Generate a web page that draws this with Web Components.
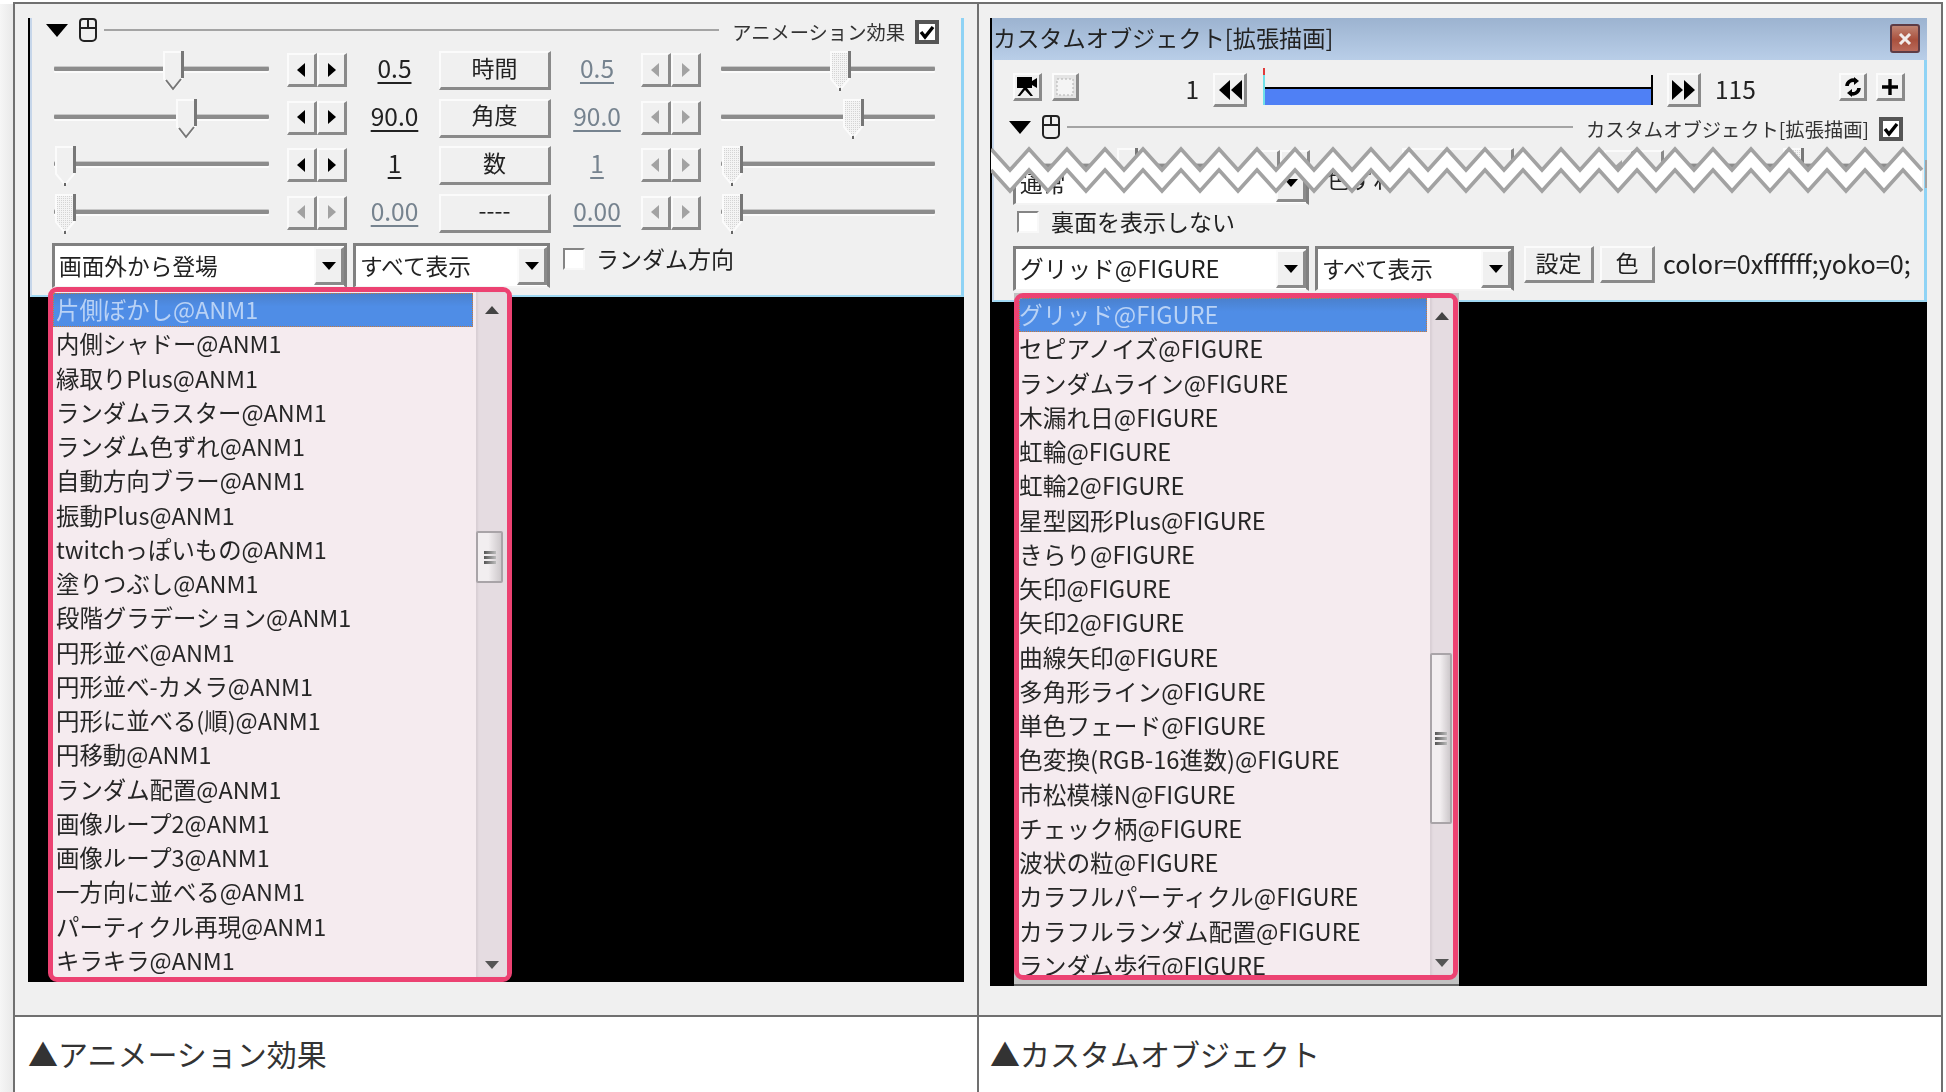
<!DOCTYPE html>
<html lang="ja">
<head>
<meta charset="utf-8">
<title>AviUtl</title>
<style>
  html, body { margin: 0; height: 100%; overflow: hidden; background: #fff; }
  body { font-family: "Noto Sans CJK JP", "Noto Sans", sans-serif; color: #222; }
</style>
</head>
<body>
<shot-table>
  <shot-cell caption="▲アニメーション効果" style="--pad:13px">
    <aul-screen style="--w:936px;--h:964px">
      <anim-panel></anim-panel>
      <aul-list slot="menu" thumb-top="239" thumb-h="52" style="left:20px;top:269px;width:464px;height:695px">
        <aul-item selected>片側ぼかし@ANM1</aul-item>
        <aul-item>内側シャドー@ANM1</aul-item>
        <aul-item>縁取りPlus@ANM1</aul-item>
        <aul-item>ランダムラスター@ANM1</aul-item>
        <aul-item>ランダム色ずれ@ANM1</aul-item>
        <aul-item>自動方向ブラー@ANM1</aul-item>
        <aul-item>振動Plus@ANM1</aul-item>
        <aul-item>twitchっぽいもの@ANM1</aul-item>
        <aul-item>塗りつぶし@ANM1</aul-item>
        <aul-item>段階グラデーション@ANM1</aul-item>
        <aul-item>円形並べ@ANM1</aul-item>
        <aul-item>円形並べ-カメラ@ANM1</aul-item>
        <aul-item>円形に並べる(順)@ANM1</aul-item>
        <aul-item>円移動@ANM1</aul-item>
        <aul-item>ランダム配置@ANM1</aul-item>
        <aul-item>画像ループ2@ANM1</aul-item>
        <aul-item>画像ループ3@ANM1</aul-item>
        <aul-item>一方向に並べる@ANM1</aul-item>
        <aul-item>パーティクル再現@ANM1</aul-item>
        <aul-item>キラキラ@ANM1</aul-item>
      </aul-list>
    </aul-screen>
  </shot-cell>
  <shot-cell caption="▲カスタムオブジェクト" style="--pad:11px">
    <aul-screen style="--w:937px;--h:968px">
      <custom-panel></custom-panel>
      <aul-list slot="menu" tail thumb-top="355" thumb-h="171" style="left:24px;top:275px;width:445px;height:693px">
        <aul-item selected>グリッド@FIGURE</aul-item>
        <aul-item>セピアノイズ@FIGURE</aul-item>
        <aul-item>ランダムライン@FIGURE</aul-item>
        <aul-item>木漏れ日@FIGURE</aul-item>
        <aul-item>虹輪@FIGURE</aul-item>
        <aul-item>虹輪2@FIGURE</aul-item>
        <aul-item>星型図形Plus@FIGURE</aul-item>
        <aul-item>きらり@FIGURE</aul-item>
        <aul-item>矢印@FIGURE</aul-item>
        <aul-item>矢印2@FIGURE</aul-item>
        <aul-item>曲線矢印@FIGURE</aul-item>
        <aul-item>多角形ライン@FIGURE</aul-item>
        <aul-item>単色フェード@FIGURE</aul-item>
        <aul-item>色変換(RGB-16進数)@FIGURE</aul-item>
        <aul-item>市松模様N@FIGURE</aul-item>
        <aul-item>チェック柄@FIGURE</aul-item>
        <aul-item>波状の粒@FIGURE</aul-item>
        <aul-item>カラフルパーティクル@FIGURE</aul-item>
        <aul-item>カラフルランダム配置@FIGURE</aul-item>
        <aul-item>ランダム歩行@FIGURE</aul-item>
      </aul-list>
    </aul-screen>
  </shot-cell>
</shot-table>

<script>
const FONT = '"Noto Sans CJK JP", "Noto Sans", sans-serif';
const RAISED = 'background:#f0f0f0;border-style:solid;border-width:2px 3px 3px 2px;border-color:#fbfbfb #8a8a8a #8a8a8a #fbfbfb;box-sizing:border-box;';

class Base extends HTMLElement {
  constructor() {
    super();
    this.attachShadow({ mode: 'open' });
  }
  connectedCallback() {
    this.render();
  }
}

class ShotTable extends Base {
  render() {
    this.shadowRoot.innerHTML = `
    <style>
      :host { display: grid; grid-template-columns: 966px 964px; width: 1930px; margin-left: 13px; padding-top: 2px;
              position: relative; font-family: ${FONT}; }
      .line { position: absolute; left: 0; right: 0; top: 2px; height: 2px; background: #707070; z-index: 1; }
      :host::before { content: ""; position: absolute; left: -13px; width: 13px; top: 4px; height: 1088px;
              background: linear-gradient(90deg, #f6f6f6, #e9e9e9); }
    </style>
    <div class="line"></div>
    <slot></slot>`;
  }
}

class ShotCell extends Base {
  render() {
    this.shadowRoot.innerHTML = `
    <style>
      :host { display: block; border-right: 2px solid #707070; height: 1090px; background: #fff; }
      :host(:first-of-type) { border-left: 2px solid #707070; }
      .pic { background: #f0f0f0; height: 1015px; padding: 16px 0 0 var(--pad); box-sizing: border-box;
             border-bottom: 2px solid #707070; }
      .cap { font-size: 30px; line-height: 40px; color: #333; padding: 16px 0 0 var(--pad); white-space: nowrap; }
    </style>
    <div class="pic"><slot></slot></div>
    <div class="cap">${this.getAttribute('caption')}</div>`;
  }
}

class AulScreen extends Base {
  render() {
    this.shadowRoot.innerHTML = `
    <style>
      :host { display: flex; flex-direction: column; width: var(--w); height: var(--h); background: #000; position: relative;
              filter: blur(.55px); }
      ::slotted([slot=menu]) { position: absolute; }
    </style>
    <slot></slot><slot name="menu"></slot>`;
  }
}

class AulMouseHead extends Base {
  render() {
    this.shadowRoot.innerHTML = `
    <style>
      :host { display: flex; align-items: flex-start; height: 26px; font-size: 19.300px; color: #333; }
      .tri { width: 0; height: 0; border-style: solid; border-width: 13px 11px 0; border-color: #000 transparent transparent;
             margin-top: 6px; }
      svg { margin-left: 11px; flex: none; }
      .rule { flex: 1; height: 2px; background: #a4a4a4; margin: 11px 13px 0 7px; }
      .lb { line-height: 26px; margin-top: 1px; white-space: nowrap; margin-right: 10px; }
      aul-check { margin-top: 2px; }
    </style>
    <div class="tri"></div>
    <svg width="18" height="24" viewBox="0 0 18 24" fill="none" stroke="#222" stroke-width="2">
      <path d="M4 1h10a3 3 0 0 1 3 3v15a4 4 0 0 1-4 4H5a4 4 0 0 1-4-4V4a3 3 0 0 1 3-3z"/>
      <path d="M1 10h16M9 1v9"/>
    </svg>
    <div class="rule"></div>
    <div class="lb"><slot></slot></div>
    <aul-check checked></aul-check>`;
  }
}

class AulCheck extends Base {
  render() {
    const on = this.hasAttribute('checked');
    this.shadowRoot.innerHTML = `
    <style>
      :host { display: block; flex: none; box-sizing: border-box; background: #fff;
              width: ${on ? 24 : 22}px; height: ${on ? 24 : 22}px;
              border: ${on ? '4px solid #555' : '2px solid'}; ${on ? '' : 'border-color:#858585 #f8f8f8 #f8f8f8 #858585;'} }
      svg { display: block; }
    </style>
    ${on ? '<svg width="16" height="16" viewBox="0 0 16 16"><path d="M2 8l4 5 8-10" fill="none" stroke="#000" stroke-width="3.4"/></svg>' : ''}`;
  }
}

class AulSlider extends Base {
  render() {
    const pos = this.getAttribute('pos') || 0;
    const dis = this.hasAttribute('disabled');
    const chev = this.hasAttribute('chevron');
    this.shadowRoot.innerHTML = `
    <style>
      :host { display: block; position: relative; height: 41px; }
      .track { height: 4px; margin-top: 16px; background: #8c8c8c; box-shadow: 0 -1px #c8c8c8, 0 2px #fbfbfb; border-radius: 1px; }
      svg { position: absolute; top: 0; left: ${pos}px; }
    </style>
    <div class="track"></div>
    <svg width="21" height="41" viewBox="0 0 21 41">
      <defs><pattern id="d" width="2" height="2" patternUnits="userSpaceOnUse"><rect width="2" height="2" fill="#f4f4f4"/><rect width="1" height="1" fill="#d4d4d4"/></pattern></defs>
      <path d="M1 1h18v27l-9 11-9-11z" fill="${dis ? 'url(#d)' : '#f0f0f0'}" stroke="#fbfbfb" stroke-width="2"/>
      <path d="M19.500 0v27" stroke="#777" stroke-width="3"/>
      ${chev ? '<path d="M3 29l7 9 8-10" fill="none" stroke="#777" stroke-width="2"/>' : '<path d="M10 37v3" stroke="#666" stroke-width="2"/>'}
    </svg>`;
  }
}

class AulSpin extends Base {
  render() {
    const c = this.hasAttribute('disabled') ? '#a2a2a2' : '#000';
    this.shadowRoot.innerHTML = `
    <style>
      :host { display: flex; height: 34px; margin-top: 2px; }
      div { ${RAISED} width: 30px; height: 34px; display: flex; align-items: center; justify-content: center; }
    </style>
    <div><svg width="9" height="14"><path d="M8 0v14L0 7z" fill="${c}"/></svg></div>
    <div><svg width="9" height="14"><path d="M1 0v14l8-7z" fill="${c}"/></svg></div>`;
  }
}

class AulValue extends Base {
  render() {
    const c = this.hasAttribute('disabled') ? '#76838f' : '#222';
    this.shadowRoot.innerHTML = `
    <style>
      :host { display: block; text-align: center; font-size: 24.500px; line-height: 34px; height: 36px; color: ${c}; }
      span { text-decoration: underline; text-decoration-thickness: 2px; text-underline-offset: 4px; }
    </style>
    <span><slot></slot></span>`;
  }
}

class AulButton extends Base {
  render() {
    this.shadowRoot.innerHTML = `
    <style>
      :host { ${RAISED} display: flex; align-items: center; justify-content: center; font-size: 23px; color: #222;
              height: var(--bh, 39px); white-space: nowrap; padding-bottom: var(--pb, 7px); flex: none; }
    </style>
    <slot></slot>`;
  }
}

class AulSelect extends Base {
  render() {
    this.shadowRoot.innerHTML = `
    <style>
      :host { display: flex; box-sizing: border-box; height: 45px; background: #fff; flex: none; font-size: 22.700px; color: #222;
              border-style: solid; border-width: 3px 3px 2px 3px; border-color: #808080 #808080 #f4f4f4 #808080; }
      .t { flex: 1; padding: 0 0 0 4px; line-height: 39px; white-space: nowrap; overflow: hidden; }
      .b { ${RAISED} width: 30px; height: 38px; margin: 1px 0 0; display: flex; align-items: center; justify-content: center; }
      .b svg { margin-top: 1px; }
    </style>
    <div class="t"><slot></slot></div>
    <div class="b"><svg width="14" height="8"><path d="M0 0h14L7 8z" fill="#000"/></svg></div>`;
  }
}

// one row of the track bars, left slider / spin / value / button / value / spin / right slider
class AulRow extends Base {
  render() {
    const g = n => this.getAttribute(n) || '';
    const off = this.hasAttribute('off') ? 'disabled' : '';
    const chev = this.hasAttribute('flat') || off ? '' : 'chevron';
    this.shadowRoot.innerHTML = `
    <style>
      :host { display: grid; grid-template-columns: 215px 78px 92px 112px 90px 60px 234px;
              height: 47.500px; align-items: start; }
      aul-spin.a { margin-left: 18px; }
      aul-slider.b { margin-left: 20px; }
      aul-value.a { padding-left: 3px; }
      aul-value.b { padding-left: 2px; }
    </style>
    <aul-slider class="a" pos="${g('l')}" ${chev} ${off}></aul-slider>
    <aul-spin class="a" ${off}></aul-spin>
    <aul-value class="a" ${off}>${g('v')}</aul-value>
    <aul-button>${g('name')}</aul-button>
    <aul-value class="b" disabled>${g('v')}</aul-value>
    <aul-spin class="b" disabled></aul-spin>
    <aul-slider class="b" pos="${g('r')}" disabled></aul-slider>`;
  }
}

class AnimPanel extends Base {
  render() {
    this.shadowRoot.innerHTML = `
    <style>
      :host { display: block; box-sizing: border-box; height: 279px; margin-left: 2px; background: #f0f0f0; font-size: 23px; color: #222;
              border-left: 2px solid #c6d6ea; border-right: 3px solid #8fd3f5; border-bottom: 2px solid #9fd8f2; }
      aul-mouse-head { margin-left: 14px; margin-right: 22px; }
      .rows { margin: 7px 0 0 22px; }
      .sel { display: flex; margin: 2px 0 0 20px; align-items: flex-start; }
      aul-select { margin-right: 6px; }
      aul-check { margin: 5px 11px 0 7px; }
      .lb { margin-top: -3px; line-height: 36px; white-space: nowrap; }
    </style>
    <aul-mouse-head>アニメーション効果</aul-mouse-head>
    <div class="rows">
      <aul-row l="109" r="109" v="0.5" name="時間"></aul-row>
      <aul-row l="122" r="122" v="90.0" name="角度"></aul-row>
      <aul-row flat l="1" r="1" v="1" name="数"></aul-row>
      <aul-row off l="1" r="1" v="0.00" name="----"></aul-row>
    </div>
    <div class="sel">
      <aul-select style="width:295px">画面外から登場</aul-select>
      <aul-select style="width:197px">すべて表示</aul-select>
      <aul-check></aul-check>
      <div class="lb">ランダム方向</div>
    </div>`;
  }
}

class ZigZag extends Base {
  render() {
    let top = [], low = [];
    for (let k = 0; k * 19 <= 936; k++) {
      const x = k * 19;
      const y = k % 2 ? 24 : 3;
      top.push(x + ',' + y);
      low.push(x + ',' + (y + 21));
    }
    const fill = top.concat(low.slice().reverse()).join(' ');
    this.shadowRoot.innerHTML = `
    <style>:host { display: block; position: absolute; left: -3px; top: 5px; pointer-events: none; }
    svg { display: block; }</style>
    <svg width="936" height="50" viewBox="0 0 936 50">
      <polygon points="${fill}" fill="#fff"/>
      <polyline points="${top.join(' ')}" fill="none" stroke="#a2a2a2" stroke-width="3.600"/>
      <polyline points="${low.join(' ')}" fill="none" stroke="#a2a2a2" stroke-width="3.600"/>
      <path d="M935 14v28" stroke="#a2a2a2" stroke-width="2"/>
    </svg>`;
  }
}

class IconButton extends Base {
  render() {
    this.shadowRoot.innerHTML = `
    <style>
      :host { ${RAISED} display: flex; align-items: center; justify-content: center; flex: none; }
    </style>
    <slot></slot>`;
  }
}

class AulTimeline extends Base {
  render() {
    this.shadowRoot.innerHTML = `
    <style>
      :host { display: block; position: relative; width: 390px; height: 37px; margin-top: -5px; flex: none; }
      .bar { margin-top: 19px; height: 16px; border-top: 2px solid #000; background: #4f80f5; }
      i { position: absolute; width: 2px; }
      .red { left: 0; top: 0; height: 7px; background: #e03a3a; }
      .cy { left: 0; top: 7px; height: 30px; background: #6fe0e8; }
      .end { right: 0; top: 7px; height: 30px; background: #000; }
    </style>
    <div class="bar"></div>
    <i class="red"></i><i class="cy"></i><i class="end"></i>`;
  }
}

class CustomPanel extends Base {
  render() {
    this.shadowRoot.innerHTML = `
    <style>
      :host { display: block; margin-left: 2px; height: 284px; font-size: 23px; color: #222; background: #f0f0f0; }
      .title { height: 42px; box-sizing: border-box; display: flex; align-items: flex-start; justify-content: space-between;
               background: linear-gradient(#9cb3d0, #b9cee8); padding: 6px 7px 0 1px; line-height: 27px; white-space: nowrap; font-size: 23.200px; }
      .close { width: 30px; height: 29px; box-sizing: border-box; border: 2px solid #5d3c46; border-radius: 3px;
               background: linear-gradient(#c08473, #a9503d 55%, #b9695a); display: flex; align-items: center; justify-content: center; }
      .body { box-sizing: border-box; height: 242px; border-left: 2px solid #c6d6ea; border-right: 3px solid #8fd3f5;
              border-bottom: 2px solid #9fd8f2; display: flow-root; }
      .top { display: flex; align-items: flex-start; margin: 13px 19px 0 19px; font-size: 24.500px; }
      .one { text-align: right; line-height: 32px; padding-right: 14px; box-sizing: border-box; flex: 0 0 134px; }
      .num { line-height: 32px; margin-left: 14px; flex: 1; }
      aul-mouse-head { margin: 8px 21px 0 15px; }
      .cut { position: relative; height: 67px; }
      .above { position: absolute; left: 23px; top: 7px; height: 22px; width: 880px; overflow: hidden; }
      .below { position: absolute; left: 19px; right: 0; top: 29px; height: 38px; overflow: hidden; display: flex; }
      .below aul-select { margin-top: -10px; height: 45px; }
      .frag { margin: -7px 0 0 18px; line-height: 30px; }
      .chk { display: flex; align-items: center; margin: 2px 0 1px 23px; height: 22px; line-height: 22px; }
      .chk aul-check { margin: 2px 12px 0 0; }
      .sel { display: flex; align-items: flex-start; margin: 14px 0 0 19px; }
      .figure { font-size: 23.700px; }
      .sel aul-button { --bh: 37px; --pb: 5px; }
      .code { margin-left: 8px; line-height: 34px; white-space: nowrap; font-size: 25.200px; }
    </style>
    <div class="title">
      <span>カスタムオブジェクト[拡張描画]</span>
      <div class="close"><svg width="14" height="12"><path d="M2 1l10 10M12 1L2 11" stroke="#f1ecec" stroke-width="3"/></svg></div>
    </div>
    <div class="body">
      <div class="top">
        <icon-button style="width:29px;height:28px">
          <svg width="22" height="22" viewBox="0 0 22 22"><path d="M1 1h15v4l5-3v10l-5-3v3h-5l6 8h-2.500L9 14l-5 6H1.500l6-8H1z" fill="#000"/></svg>
        </icon-button>
        <icon-button style="width:27px;height:28px;margin-left:10px;background:#e4e4e4">
          <svg width="18" height="18" viewBox="0 0 18 18"><rect x="1" y="1" width="16" height="16" fill="#f4f4f4" stroke="#b0b0b0" stroke-dasharray="2 2"/></svg>
        </icon-button>
        <div class="one">1</div>
        <icon-button style="width:34px;height:34px">
          <svg width="24" height="20" viewBox="0 0 24 20"><path d="M12 0v20L1 10zM24 0v20L13 10z" fill="#000"/></svg>
        </icon-button>
        <aul-timeline style="margin-left:16px"></aul-timeline>
        <icon-button style="width:34px;height:34px;margin-left:14px">
          <svg width="24" height="20" viewBox="0 0 24 20"><path d="M0 0v20l11-10zM12 0v20l11-10z" fill="#000"/></svg>
        </icon-button>
        <div class="num">115</div>
        <icon-button style="width:28px;height:28px">
          <svg width="16" height="20" viewBox="0 0 16 20" fill="none" stroke="#000" stroke-width="3.600"><path d="M2 9a6 6 0 0 1 9-5"/><path d="M14 11a6 6 0 0 1-9 5"/><path d="M9 0v8l5-4z" fill="#000" stroke="none"/><path d="M7 12v8l-5-4z" fill="#000" stroke="none"/></svg>
        </icon-button>
        <icon-button style="width:29px;height:28px;margin:0 0 0 9px">
          <svg width="16" height="16"><path d="M8 0v16M0 8h16" stroke="#000" stroke-width="3.400"/></svg>
        </icon-button>
      </div>
      <aul-mouse-head>カスタムオブジェクト[拡張描画]</aul-mouse-head>
      <div class="cut">
        <div class="above"><aul-row l="100" r="99"></aul-row></div>
        <div class="below">
          <aul-select style="width:296px">通常</aul-select>
          <div class="frag">色ずれ</div>
        </div>
        <zig-zag></zig-zag>
      </div>
      <div class="chk"><aul-check></aul-check>裏面を表示しない</div>
      <div class="sel">
        <aul-select class="figure" style="width:296px">グリッド@FIGURE</aul-select>
        <aul-select style="width:199px;margin-left:6px">すべて表示</aul-select>
        <aul-button style="width:70px;margin-left:10px">設定</aul-button>
        <aul-button style="width:55px;margin-left:6px">色</aul-button>
        <div class="code">color=0xffffff;yoko=0;</div>
      </div>
    </div>`;
  }
}

class AulList extends Base {
  render() {
    const tail = this.hasAttribute('tail');
    this.shadowRoot.innerHTML = `
    <style>
      :host { display: block; box-sizing: border-box; font-size: ${tail ? 23.7 : 23.4}px; color: #262626;
              ${tail ? 'background:#c2c2c2;border-bottom:2px solid #666;padding:0 1px 4px 0;' : ''} }
      .box { display: flex; box-sizing: border-box; height: 100%; border: 5px solid #ec4272; border-radius: 9px;
             background: #f5ebef; overflow: hidden; }
      .items { flex: 1; min-width: 0; padding: ${tail ? '0' : '1px'} 3px 0 0; overflow: hidden; }
      .bar { width: ${tail ? 23 : 31}px; flex: none; background: #e5dce1; position: relative; box-shadow: inset 2px 0 2px #d8ced4; }
      .thumb { box-sizing: border-box; margin: 0 ${tail ? 1 : 4}px 0 0; height: var(--th); border: 2px solid #a9a4a8; border-radius: 2px;
               background: linear-gradient(90deg, #f2eef0 45%, #cdc8cb); display: flex; flex-direction: column; align-items: center;
               justify-content: center; gap: 2px; }
      .thumb i { display: block; width: 12px; height: 3px; background: linear-gradient(90deg, #555, #bbb); }
      .gap { height: var(--tt); }
      .arr { position: absolute; left: 50%; margin-left: -7px; width: 14px; height: 8px; }
      .up { top: 14px; } .dn { bottom: 8px; }
      ::slotted(aul-item) { --ip: ${tail ? 0 : 3}px; }
    </style>
    <div class="box" style="--th:${this.getAttribute('thumb-h')}px;--tt:${this.getAttribute('thumb-top')}px">
      <div class="items"><slot></slot></div>
      <div class="bar">
        <svg class="arr up" viewBox="0 0 14 8"><path d="M0 8h14L7 0z" fill="#444"/></svg>
        <div class="gap"></div>
        <div class="thumb"><i></i><i></i><i></i></div>
        <svg class="arr dn" viewBox="0 0 14 8"><path d="M0 0h14L7 8z" fill="#555"/></svg>
      </div>
    </div>`;
  }
}

class AulItem extends Base {
  render() {
    const on = this.hasAttribute('selected');
    this.shadowRoot.innerHTML = `
    <style>
      :host { display: block; box-sizing: border-box; height: 34.250px; line-height: 32px; padding-left: var(--ip, 3px); white-space: nowrap;
              ${on ? 'background:linear-gradient(#4a80cc,#4f8de6 40%);color:#b9d2f5;outline:1px dotted #c8793a;outline-offset:-1px;' : ''} }
    </style>
    <slot></slot>`;
  }
}

customElements.define('shot-table', ShotTable);
customElements.define('shot-cell', ShotCell);
customElements.define('aul-screen', AulScreen);
customElements.define('aul-mouse-head', AulMouseHead);
customElements.define('aul-check', AulCheck);
customElements.define('aul-slider', AulSlider);
customElements.define('aul-spin', AulSpin);
customElements.define('aul-value', AulValue);
customElements.define('aul-button', AulButton);
customElements.define('aul-select', AulSelect);
customElements.define('aul-row', AulRow);
customElements.define('anim-panel', AnimPanel);
customElements.define('zig-zag', ZigZag);
customElements.define('icon-button', IconButton);
customElements.define('aul-timeline', AulTimeline);
customElements.define('custom-panel', CustomPanel);
customElements.define('aul-list', AulList);
customElements.define('aul-item', AulItem);
</script>
</body>
</html>
